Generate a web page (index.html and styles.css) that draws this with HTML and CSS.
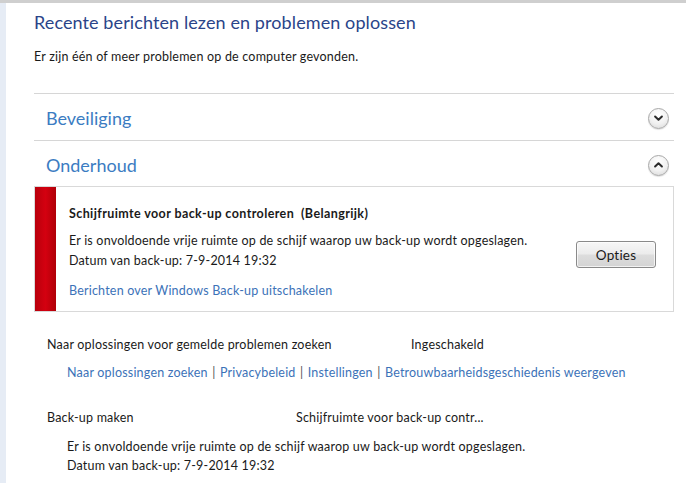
FILE: index.html
```
<!DOCTYPE html>
<html lang="nl">
<head>
<meta charset="utf-8">
<title>Onderhoudscentrum</title>
<link rel="stylesheet" href="styles.css">
</head>
<body>
<div class="topbar"></div>
<div class="page">
  <div class="rail"></div>
  <main class="content">
    <h1 class="title">Recente berichten lezen en problemen oplossen</h1>
    <p class="subtitle">Er zijn één of meer problemen op de computer gevonden.</p>

    <section class="group">
      <div class="group-head">
        <h2 class="group-name">Beveiliging</h2>
        <button class="chev" aria-label="Uitvouwen">
          <svg viewBox="0 0 20 20" width="20" height="20"><path d="M6.4 8.4 L10 11.9 L13.6 8.4" fill="none" stroke="#2b2b2b" stroke-width="2.1" stroke-linecap="round" stroke-linejoin="round"/></svg>
        </button>
      </div>
    </section>

    <section class="group">
      <div class="group-head">
        <h2 class="group-name">Onderhoud</h2>
        <button class="chev" aria-label="Samenvouwen">
          <svg viewBox="0 0 20 20" width="20" height="20"><path d="M6.4 11.6 L10 8.1 L13.6 11.6" fill="none" stroke="#2b2b2b" stroke-width="2.1" stroke-linecap="round" stroke-linejoin="round"/></svg>
        </button>
      </div>
      <div class="alert">
        <div class="alert-bar"></div>
        <div class="alert-body">
          <div class="alert-text">
            <h3 class="alert-title">Schijfruimte voor back-up controleren&nbsp; (Belangrijk)</h3>
            <p class="alert-desc">Er is onvoldoende vrije ruimte op de schijf waarop uw back-up wordt opgeslagen.<br>Datum van back-up: 7-9-2014 19:32</p>
            <a class="link alert-link" href="#">Berichten over Windows Back-up uitschakelen</a>
          </div>
          <button class="btn">Opties</button>
        </div>
      </div>
    </section>

    <div class="item">
      <div class="item-row item-row--wide">
        <span class="item-name">Naar oplossingen voor gemelde problemen zoeken</span>
        <span class="item-status">Ingeschakeld</span>
      </div>
      <div class="item-links">
        <a class="link" href="#">Naar oplossingen zoeken</a> <span class="sep">|</span>
        <a class="link" href="#">Privacybeleid</a> <span class="sep">|</span>
        <a class="link" href="#">Instellingen</a> <span class="sep">|</span>
        <a class="link" href="#">Betrouwbaarheidsgeschiedenis weergeven</a>
      </div>
    </div>

    <div class="item item--last">
      <div class="item-row item-row--narrow">
        <span class="item-name">Back-up maken</span>
        <span class="item-status">Schijfruimte voor back-up contr...</span>
      </div>
      <p class="item-desc">Er is onvoldoende vrije ruimte op de schijf waarop uw back-up wordt opgeslagen.<br>Datum van back-up: 7-9-2014 19:32</p>
    </div>
  </main>
</div>
</body>
</html>
```

FILE: styles.css
```
* { box-sizing: border-box; }

html, body {
  margin: 0;
  padding: 0;
  background: #ffffff;
}

body {
  font-family: "Lato", "Open Sans", "DejaVu Sans", sans-serif;
  font-size: 12.5px;
  letter-spacing: 0.2px;
  color: #1a1a1a;
  overflow: hidden;
  height: 483px;
}

.topbar {
  height: 3px;
  background: #cfcfcf;
}

.page {
  display: flex;
  height: 480px;
}

.rail {
  width: 6px;
  flex: none;
  background: #e6ecf5;
}

.content {
  flex: 1;
  padding: 7px 12px 0 28px;
}

.title {
  margin: 0;
  font-size: 18px;
  line-height: 24px;
  font-weight: 400;
  color: #2a4489;
  letter-spacing: 0.1px;
}

.subtitle {
  margin: 14px 0 0;
  line-height: 18px;
}

.subtitle + .group {
  margin-top: 27px;
}

.group {
  border-top: 1px solid #d6d6d6;
}

.group-head {
  height: 46px;
  display: flex;
  align-items: center;
  justify-content: space-between;
  padding: 2px 5px 0 12px;
}

.group-name {
  margin: 0;
  font-size: 18px;
  font-weight: 400;
  letter-spacing: 0;
  color: #3b7cc2;
}

.chev {
  width: 21px;
  height: 21px;
  padding: 0;
  border-radius: 50%;
  border: 1px solid #a8a8a8;
  background: radial-gradient(circle at 50% 30%, #ffffff 0%, #f1f1f1 55%, #d6d6d6 100%);
  display: flex;
  align-items: center;
  justify-content: center;
  box-shadow: 0 1px 1px rgba(0,0,0,0.12);
}

.chev svg {
  display: block;
}

.alert {
  display: flex;
  border: 1px solid #d9d9d9;
  height: 126px;
  margin-top: -1px;
}

.alert-bar {
  width: 21px;
  flex: none;
  background: linear-gradient(90deg, #b8000c 0%, #d40010 50%, #b00008 100%);
}

.alert-body {
  flex: 1;
  display: flex;
  justify-content: space-between;
  padding: 17px 17px 0 13px;
}

.alert-title {
  margin: 0;
  font-size: 12.5px;
  line-height: 20px;
  font-weight: 700;
  letter-spacing: 0.4px;
}

.alert-desc {
  margin: 7px 0 0;
  line-height: 20px;
}

.alert-link {
  display: block;
  margin-top: 10px;
  line-height: 20px;
}

.link {
  color: #3c72b8;
  text-decoration: none;
}

.btn {
  margin-top: 37px;
  width: 80px;
  height: 27px;
  border: 1px solid #8a8a8a;
  border-radius: 3px;
  background: linear-gradient(180deg, #f7f7f7 0%, #ececec 48%, #dddddd 52%, #d4d4d4 100%);
  font-family: inherit;
  font-size: 13.5px;
  letter-spacing: 0.2px;
  color: #1a1a1a;
  padding: 0;
  box-shadow: inset 0 0 0 1px rgba(255,255,255,0.7);
}

.item {
  padding-left: 13px;
  margin-top: 24px;
}

.item--last {
  margin-top: 27px;
}

.item-row {
  display: grid;
  line-height: 18px;
}

.item-row--wide {
  grid-template-columns: 364px auto;
}

.item-row--narrow {
  grid-template-columns: 249px auto;
}

.item-links {
  margin-top: 10px;
  padding-left: 20px;
  line-height: 18px;
  color: #444;
}

.sep {
  color: #555;
  margin: 0 1px;
}

.item-desc {
  margin: 10px 0 0;
  padding-left: 20px;
  line-height: 19px;
}
```
